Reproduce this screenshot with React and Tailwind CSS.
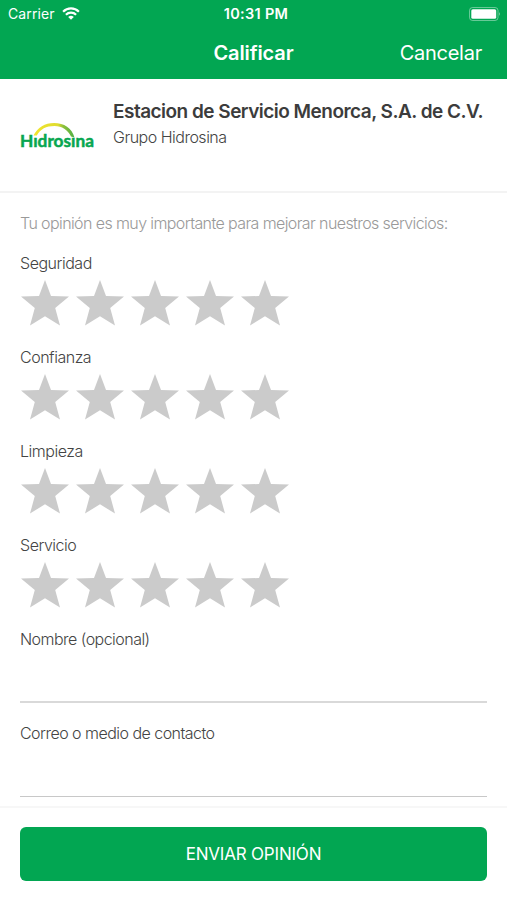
import { useState } from "react";

const ratings = [
    { key: "seguridad", label: "Seguridad" },
    { key: "confianza", label: "Confianza" },
    { key: "limpieza", label: "Limpieza" },
    { key: "servicio", label: "Servicio" },
];

const WifiIcon = () => (
    <svg viewBox="0 0 18 13" className="w-[18px] h-[13px]" fill="none" stroke="white" strokeWidth="2.2">
        <path d="M1.1 4.7 A11.2 11.2 0 0 1 16.9 4.7" />
        <path d="M3.9 7.7 A7.2 7.2 0 0 1 14.1 7.7" />
        <path d="M9 12.8 L6.2 10 A4 4 0 0 1 11.8 10 Z" fill="white" stroke="none" />
    </svg>
);

const BatteryIcon = () => (
    <svg viewBox="0 0 32 14" className="w-8 h-3.5">
        <rect x="0.5" y="0.5" width="28.5" height="13" rx="3" fill="none" stroke="white" strokeOpacity="0.4" />
        <rect x="2.3" y="2.2" width="24.9" height="9.6" rx="1.6" fill="white" />
        <path d="M30.2 5 Q31.8 7 30.2 9 Z" fill="white" fillOpacity="0.6" />
    </svg>
);

const Logo = () => (
    <svg viewBox="0 0 80 44" className="w-20 h-11 overflow-visible">
        <defs>
            <linearGradient id="arc" x1="0" x2="1">
                <stop offset="0" stopColor="#f2e52e" />
                <stop offset="0.6" stopColor="#dfdc30" />
                <stop offset="0.72" stopColor="#8fc03a" />
                <stop offset="1" stopColor="#4fae45" />
            </linearGradient>
        </defs>
        <path d="M13.5 15.5 C17.5 7.5 25 3 34 3 C44 3 52 8 54.5 17.5 L51 16.5 C47.5 9.5 42 6.2 34.5 6 C26 6 20.5 9 16.8 15.5 Z" fill="url(#arc)" />
        <text x="0" y="27" textLength="74" lengthAdjust="spacingAndGlyphs" fill="#08a650" stroke="#08a650" strokeWidth="0.5" className="font-[Lato,sans-serif] text-[17.5px] font-bold">
            Hıdrosına
        </text>
    </svg>
);

const Star = ({ active }) => (
    <svg viewBox="0 0 48 46" className={active ? "w-12 h-[46px] fill-[#f7c52a]" : "w-12 h-[46px] fill-[#cbcbcb]"}>
        <path d="M24 0 L30 16 L48 16.6 L34.2 28.1 L39 45.6 L24 36.2 L9 45.6 L13.8 28.1 L0 16.6 L18 16 Z" />
    </svg>
);

const RatingRow = ({ label, value, onChange }) => (
    <div className="h-[94px]">
        <p className="h-6 leading-6 text-base font-light tracking-[-0.48px] text-[#444]">{label}</p>
        <div className="flex gap-[7px] pt-[5px] pl-px">
            {[1, 2, 3, 4, 5].map((n) => (
                <button key={n} aria-label={`${label} ${n}`} onClick={() => onChange(n)}>
                    <Star active={n <= value} />
                </button>
            ))}
        </div>
    </div>
);

const Field = ({ label }) => (
    <label className="group block h-[94px]">
        <span className="block h-6 leading-6 text-base font-light tracking-[-0.53px] text-[#444]">{label}</span>
        <input className="block w-full h-[52px] border-b-2 border-[#d9d9d9] outline-none group-last:border-b group-last:border-[#c8c8c8]" />
    </label>
);

export default function App() {
    const [scores, setScores] = useState({});

    return (
        <div className="h-[900px] flex flex-col bg-white overflow-hidden font-[Inter,sans-serif]">
            <header className="h-[79px] shrink-0 bg-[#02a652] text-white">
                <div className="h-[27px] grid grid-cols-3 items-center pl-2 pr-[6px] text-sm">
                    <div className="flex items-center gap-[7px]">
                        <span className="tracking-[0.1px]">Carrier</span>
                        <WifiIcon />
                    </div>
                    <span className="pl-[3px] text-center text-[14.5px] leading-5 font-semibold tracking-[0.3px]">10:31 PM</span>
                    <div className="flex justify-end">
                        <BatteryIcon />
                    </div>
                </div>
                <div className="h-[51px] grid grid-cols-3 items-center px-[25px] text-xl">
                    <h1 className="col-start-2 text-center font-semibold tracking-[-0.1px]">Calificar</h1>
                    <button className="text-right tracking-[-0.25px]">Cancelar</button>
                </div>
            </header>

            <section className="h-[114px] shrink-0 flex pl-5 border-b-2 border-[#f3f3f3]">
                <div className="w-[93px] pt-[41px]">
                    <Logo />
                </div>
                <div className="pt-[19px] whitespace-nowrap">
                    <h2 className="text-[19px] leading-[27px] font-semibold tracking-[-0.52px] text-[#3c3c3c]">Estacion de Servicio Menorca, S.A. de C.V.</h2>
                    <p className="text-base leading-6 font-light tracking-[-0.5px] text-[#444]">Grupo Hidrosina</p>
                </div>
            </section>

            <main className="h-[613px] shrink-0 overflow-hidden px-5 pt-[18px]">
                <p className="h-10 leading-6 text-base font-light tracking-[-0.6px] text-[#999] whitespace-nowrap">
                    Tu opinión es muy importante para mejorar nuestros servicios:
                </p>
                {ratings.map((r) => (
                    <RatingRow
                        key={r.key}
                        label={r.label}
                        value={scores[r.key] || 0}
                        onChange={(n) => setScores({ ...scores, [r.key]: n })}
                    />
                ))}
                <Field label="Nombre (opcional)" />
                <Field label="Correo o medio de contacto" />
            </main>

            <footer className="grow border-t-2 border-[#f7f7f7] px-5 pt-[19px]">
                <button className="w-full h-[54px] pt-0.5 rounded-md bg-[#02a652] text-white text-[17px] tracking-[-0.2px]">ENVIAR OPINIÓN</button>
            </footer>
        </div>
    );
}
